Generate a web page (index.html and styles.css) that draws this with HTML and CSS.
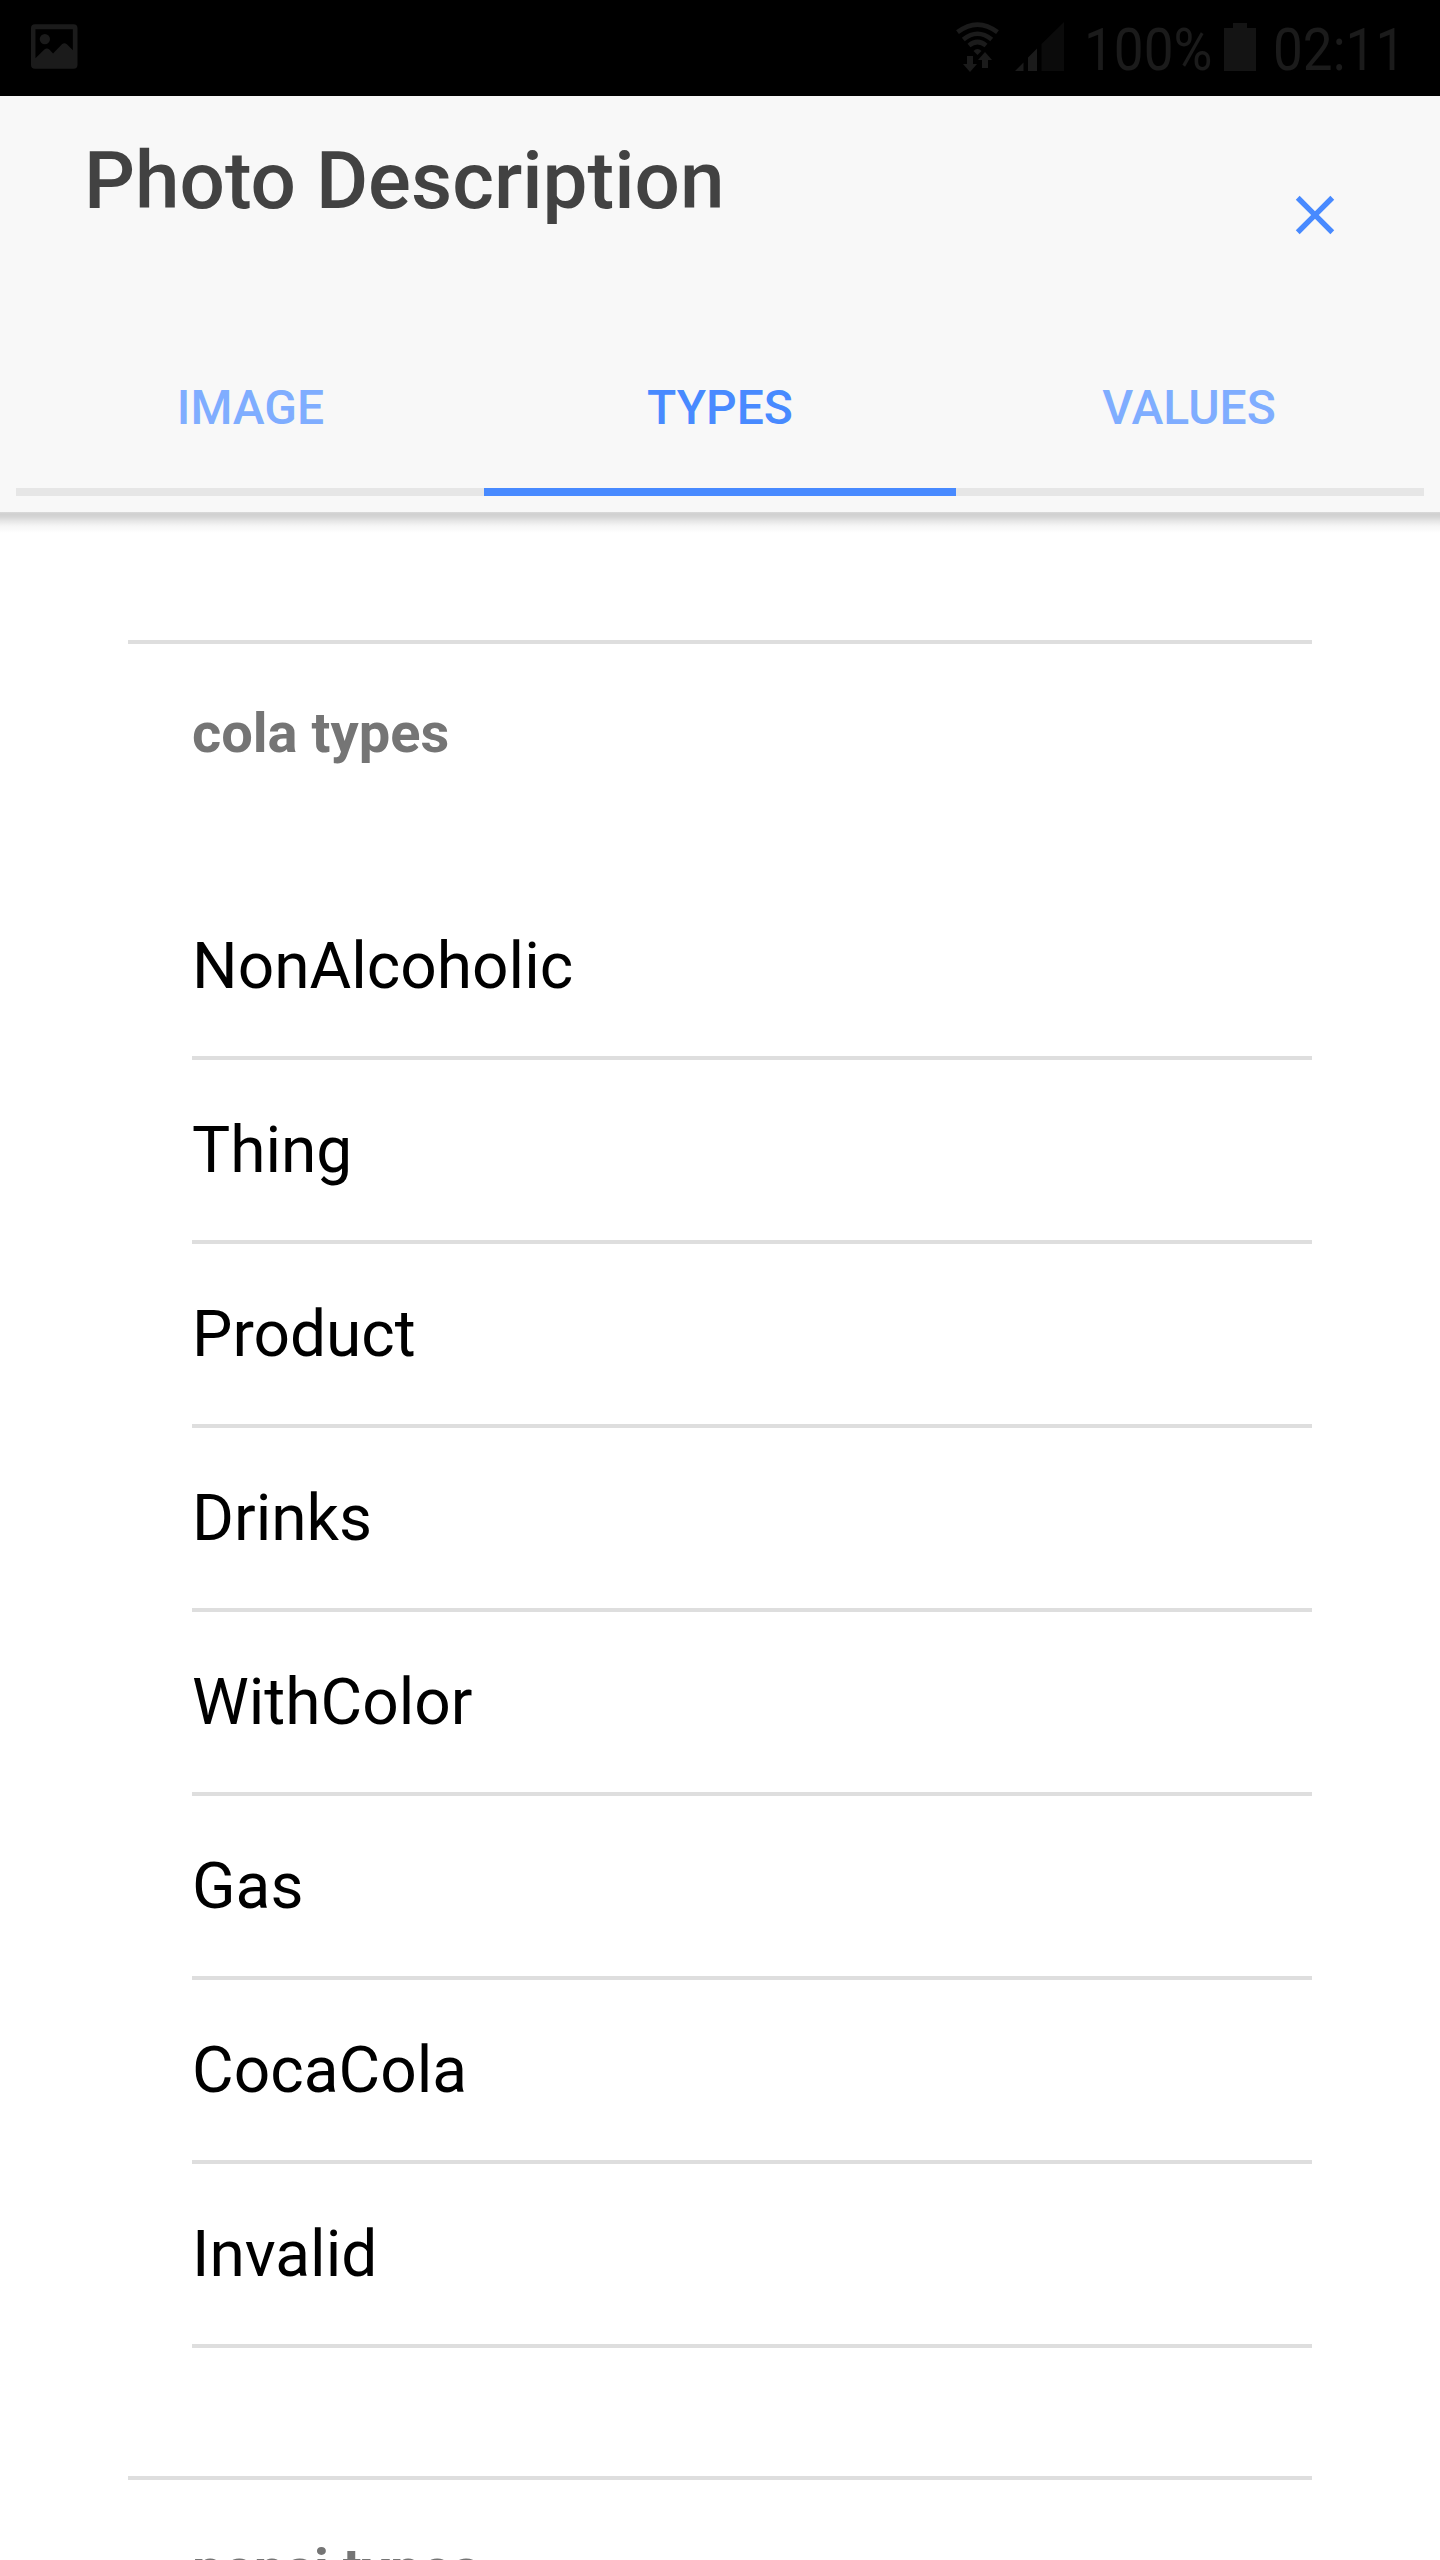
FILE: index.html
```html
<!DOCTYPE html>
<html lang="en">
<head>
<meta charset="utf-8">
<title>Photo Description</title>
<link rel="stylesheet" href="styles.css">
</head>
<body>
<div class="screen">
  <div class="status">
    <svg class="picture" viewBox="0 0 47 45"><path fill-rule="evenodd" d="M4 0h39a4 4 0 0 1 4 4v37a4 4 0 0 1-4 4H4a4 4 0 0 1-4-4V4a4 4 0 0 1 4-4zM4.500 5v29.500l9-9q2.500-2.200 5 0l3.800 4 9-9.300q2.500-2.200 5 0l6 6V5z"/><circle cx="14" cy="15" r="5.200"/></svg>
    <svg class="wifi" viewBox="0 0 43 50">
      <g fill="none" stroke-width="4.600"><path d="M1.500 10.200Q21.500-5 41.500 10.200"/><path d="M7.300 17.500Q21.500 6 35.700 17.500"/><path d="M13 23.500Q21.500 16.500 30 23.500"/></g>
      <path stroke="none" d="M17.500 29q4-4 8 0l-4 4zM11 34h6v8h4l-7 8-7-8h4zM26 46v-8h-4l7-8 7 8h-4v8z"/>
    </svg>
    <svg class="signal" viewBox="0 0 49 49"><path d="M0 49l8.500-8.500V49zM13 49V35.500l9-9V49z"/><path class="dim" d="M26.500 49V22L49 0v49z"/></svg>
    <span class="reading charge">100%</span>
    <svg class="battery" viewBox="0 0 32 48"><path d="M9 0h14v5h9v43H0V5h9z"/></svg>
    <span class="reading clock">02:11</span>
  </div>
  <header class="header">
    <div class="toolbar">
      <h1 class="title">Photo Description</h1>
      <svg class="close" viewBox="0 0 512 512"><path d="M405 136.800L375.200 107 256 226.200 136.800 107 107 136.800 226.200 256 107 375.200 136.800 405 256 285.800 375.200 405 405 375.200 285.800 256z"/></svg>
    </div>
    <nav class="tabs">
      <div class="tab">IMAGE</div>
      <div class="tab active">TYPES</div>
      <div class="tab">VALUES</div>
    </nav>
  </header>
  <main class="content">
    <section class="group">
      <h2 class="group-title">cola types</h2>
      <ul class="list">
        <li class="item">NonAlcoholic</li>
        <li class="item">Thing</li>
        <li class="item">Product</li>
        <li class="item">Drinks</li>
        <li class="item">WithColor</li>
        <li class="item">Gas</li>
        <li class="item">CocaCola</li>
        <li class="item">Invalid</li>
      </ul>
    </section>
    <section class="group">
      <h2 class="group-title">pepsi types</h2>
    </section>
  </main>
</div>
</body>
</html>
```

FILE: styles.css
```css
* { box-sizing: border-box; }
body { margin: 0; background: #fff; font-family: Roboto, sans-serif; }
h1, h2, ul { margin: 0; padding: 0; }

.screen {
  display: flex;
  flex-direction: column;
  width: 1440px;
  height: 2560px;
  overflow: hidden;
  background: #fff;
}

.status {
  display: flex;
  flex: none;
  align-items: flex-start;
  height: 96px;
  padding: 0 44px 0 31px;
  background: #000;
  color: #1b1b1b;
  fill: #1b1b1b;
}
.picture { width: 46.5px; height: 45px; margin-top: 24px; }
.wifi { width: 43px; height: 50px; margin: 22px 16px 0 auto; stroke: #1b1b1b; }
.signal { width: 49px; height: 49px; margin-top: 22px; }
.dim { fill: #0b0b0b; }
.battery { width: 32px; height: 48px; margin-top: 23px; fill: #141414; }
.reading {
  height: 96px;
  font-size: 60px;
  line-height: 99px;
  white-space: nowrap;
  transform: scaleX(.885);
  transform-origin: 0 0;
}
.charge { width: 140px; margin-left: 20px; }
.clock { width: 123px; margin-left: 17px; }

.header {
  display: flex;
  flex: none;
  flex-direction: column;
  height: 416px;
  background: #f8f8f8;
}
.toolbar {
  display: flex;
  justify-content: space-between;
  height: 208px;
  padding: 0 92px 0 84px;
}
.title {
  margin-top: 38px;
  color: #424242;
  font-size: 80px;
  font-weight: 500;
  line-height: 94px;
}
.close { width: 66px; height: 66px; margin-top: 86px; fill: #488aff; }

.tabs {
  display: grid;
  grid-template-columns: 468px 472px 468px;
  grid-template-rows: 192px;
  margin: 0 16px;
}
.tab {
  height: 192px;
  border-bottom: 8px solid #e6e6e6;
  color: #7fadff;
  font-size: 48px;
  font-weight: 500;
  line-height: 208px;
  text-align: center;
}
.tab:first-child { padding-left: 1px; }
.tab:last-child { padding-right: 2px; }
.tab.active { border-color: #488aff; color: #488aff; }

.content {
  flex: none;
  padding: 128px 128px 0;
  background: linear-gradient(#dadada 0, #d0d0d0 2px, #d6d6d6 5px, #e6e6e6 9px, #f6f6f6 14px, #fcfcfc 19px, #fff 21px) no-repeat;
}
.group {
  height: 1836px;
  padding-left: 64px;
  border-top: 4px solid #dedede;
}
.group-title {
  height: 232px;
  color: #757575;
  font-size: 56px;
  font-weight: 700;
  line-height: 178px;
}
.list { list-style: none; }
.item {
  height: 184px;
  border-bottom: 4px solid #dedede;
  color: #000;
  font-size: 64px;
  line-height: 182px;
}
```
